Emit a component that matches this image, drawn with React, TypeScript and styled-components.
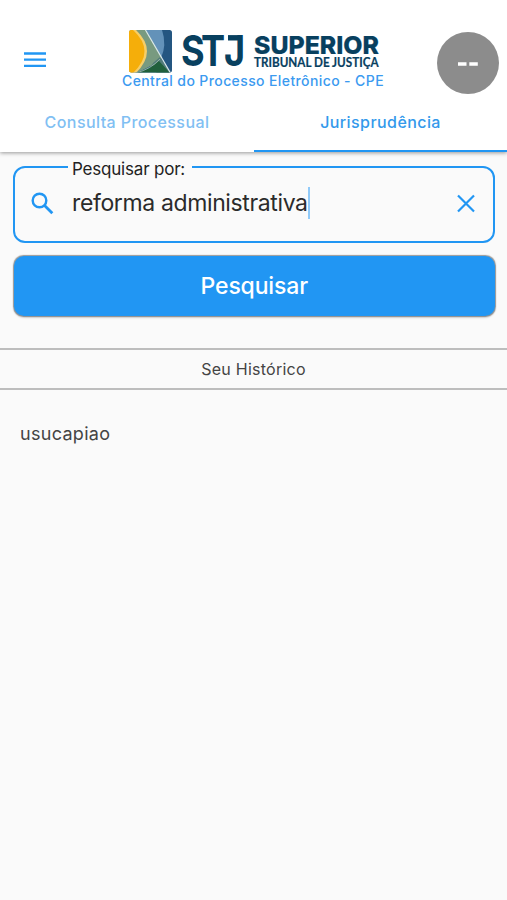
import React from "react";
import styled, { createGlobalStyle } from "styled-components";

const BLUE = "#2196f3";
const NAVY = "#08405f";

const GlobalStyle = createGlobalStyle`
  * { box-sizing: border-box; }
  body {
    margin: 0;
    background: #fafafa;
    font-family: Inter, "Liberation Sans", sans-serif;
    color: #333;
  }
  button { font-family: inherit; border: 0; padding: 0; background: none; cursor: pointer; }
`;

const Screen = styled.div`
  width: 100%;
  min-height: 900px;
  background: #fafafa;
  overflow: hidden;
`;

const Header = styled.header`
  height: 152px;
  padding-top: 27px;
  display: flex;
  flex-direction: column;
  background: #fff;
  box-shadow: 0 1px 4px rgba(0, 0, 0, 0.4);
`;

const TopBar = styled.div`
  height: 66px;
  flex: none;
  display: grid;
  grid-template-columns: 122px 262px 1fr;
`;

const MenuButton = styled.button`
  justify-self: start;
  align-self: start;
  width: 24px;
  height: 18px;
  margin: 24px 0 0 23px;
  color: ${BLUE};
  display: flex;
`;

const Brand = styled.div`
  display: flex;
  flex-direction: column;
`;

const LogoSvg = styled.svg`
  display: block;
  flex: none;
  overflow: visible;
`;

const Subtitle = styled.div`
  font-size: 14px;
  line-height: 18px;
  margin-top: -3px;
  font-weight: 500;
  letter-spacing: 0.39px;
  color: #3b9af0;
  white-space: nowrap;
`;

const Avatar = styled.div`
  justify-self: end;
  width: 62px;
  height: 62px;
  margin: 5px 8px 0 0;
  padding-top: 2px;
  border-radius: 50%;
  background: #8c8c8c;
  display: flex;
  align-items: center;
  justify-content: center;
`;

const Tabs = styled.nav`
  flex: 1;
  display: grid;
  grid-template-columns: 254px 1fr;
`;

const Tab = styled.button<{ $active?: boolean }>`
  padding-bottom: ${(p) => (p.$active ? 0 : 2)}px;
  border-bottom: ${(p) => (p.$active ? `2px solid ${BLUE}` : "0")};
  color: ${(p) => (p.$active ? "#3399eb" : "#81bff3")};
  font-size: 16px;
  font-weight: 500;
  letter-spacing: 0.42px;
`;

const Content = styled.main`
  padding: 7px 12.5px 0 13px;
  display: flex;
  flex-direction: column;
`;

const SearchField = styled.fieldset`
  margin: 0;
  min-width: 0;
  height: 84px;
  padding: 0 16px 0 15px;
  border: 2px solid ${BLUE};
  border-radius: 12px;
  color: ${BLUE};
`;

const Legend = styled.legend`
  margin-left: 38px;
  padding: 0 6px 0 4px;
  height: 16px;
  width: 124px;
  font-size: 17px;
  line-height: 20px;
  letter-spacing: -0.2px;
  color: #222;
  white-space: nowrap;
`;

const FieldRow = styled.div`
  height: 40px;
  margin-top: 8px;
  display: flex;
  align-items: center;
`;

const Query = styled.div`
  flex: 1;
  margin-left: 16px;
  display: flex;
  align-items: center;
  font-size: 23px;
  letter-spacing: -0.37px;
  color: #2b2b2b;
  white-space: nowrap;
`;

const Caret = styled.span`
  width: 2px;
  height: 32px;
  background: #90caf9;
`;

const ClearButton = styled.button`
  display: flex;
  color: ${BLUE};
`;

const SearchButton = styled.button`
  height: 60px;
  margin: 13px 0 0 1px;
  border-radius: 10px;
  background: ${BLUE};
  color: #fff;
  font-size: 23px;
  font-weight: 500;
  letter-spacing: -0.15px;
  box-shadow: 0 0 1px 0.5px rgba(110, 110, 110, 0.7), 0 2px 2px rgba(0, 0, 0, 0.15);
`;

const HistoryTitle = styled.h2`
  margin: 32px 0 0;
  height: 42px;
  border: solid #bdbdbd;
  border-width: 2px 0;
  font-size: 16px;
  font-weight: 400;
  letter-spacing: 0.25px;
  color: #444;
  display: flex;
  align-items: center;
  justify-content: center;
`;

const HistoryList = styled.ul`
  margin: 0;
  padding: 32px 20px;
  list-style: none;
`;

const HistoryItem = styled.li`
  font-size: 18px;
  line-height: 24px;
  letter-spacing: 0.3px;
  color: #444;
`;

function Logo() {
  return (
    <LogoSvg width="262" height="48" viewBox="122 27 262 48" role="img" aria-label="STJ">
      <defs>
        <clipPath id="mark"><rect x="129" y="30" width="43" height="42.5" rx="2.5" /></clipPath>
      </defs>
      <g clipPath="url(#mark)">
        <rect x="129" y="30" width="43" height="43" fill="#245681" />
        <path d="M146 30h16q5 15-1 28z" fill="#6392b9" />
        <path d="M136 30h10l16 28q-10 9-27 15z" fill="#789a80" />
        <path d="M160 57l11 16h-14q-8-5-4-10z" fill="#527b79" />
        <path d="M135 73q14-3 24-12l11 12z" fill="#21603c" />
        <path d="M136 30q22 21 0 43h-7v-43z" fill="#f7ce68" />
        <path d="M133 30q23 21 0 43h-4v-43z" fill="#f5ae0a" />
        <path d="M145.5 30l25 43" fill="none" stroke="#dce9ea" strokeWidth="1.2" />
        <path d="M136 73q15-4 24-14" fill="none" stroke="#a9c3ae" strokeWidth="0.8" />
      </g>
      <g fill={NAVY}>
        <text transform="scale(0.84 1)" x="215.5 239.3 266.6" y="66.4" fontFamily="Inter" fontSize="43" fontWeight="700">STJ</text>
        <rect x="228" y="35.1" width="10" height="5.4" />
        <text x="254" y="53.6" fontFamily="Inter" fontSize="25" fontWeight="800" stroke={NAVY} strokeWidth="0.2" textLength="125" lengthAdjust="spacingAndGlyphs">SUPERIOR</text>
        <text x="254" y="66.7" fontFamily="Lato" fontSize="12.5" fontWeight="700" stroke={NAVY} strokeWidth="0.2" textLength="124.5" lengthAdjust="spacingAndGlyphs">TRIBUNAL DE JUSTIÇA</text>
      </g>
    </LogoSvg>
  );
}

export default function App() {
  return (
    <>
      <GlobalStyle />
      <Screen>
        <Header>
          <TopBar>
            <MenuButton aria-label="Menu">
              <svg width="24" height="18" viewBox="0 0 24 18">
                <path d="M1 2.5h22M1 8.7h22M1 14.8h22" stroke="currentColor" strokeWidth="2.3" />
              </svg>
            </MenuButton>
            <Brand>
              <Logo />
              <Subtitle>Central do Processo Eletrônico - CPE</Subtitle>
            </Brand>
            <Avatar aria-label="Perfil">
              <svg width="22" height="4" viewBox="0 0 22 4">
                <path d="M1 2h8.5M12.3 2h8.5" stroke="#fff" strokeWidth="3.4" />
              </svg>
            </Avatar>
          </TopBar>
          <Tabs>
            <Tab>Consulta Processual</Tab>
            <Tab $active>Jurisprudência</Tab>
          </Tabs>
        </Header>
        <Content>
          <SearchField>
            <Legend>Pesquisar por:</Legend>
            <FieldRow>
              <svg width="26" height="24" viewBox="0 0 26 24" fill="none" stroke="currentColor">
                <circle cx="9.5" cy="9.5" r="6.8" strokeWidth="2.4" />
                <path d="M14.3 14.3l8 8" strokeWidth="2.8" />
              </svg>
              <Query>
                <span>reforma administrativa</span>
                <Caret />
              </Query>
              <ClearButton aria-label="Limpar">
                <svg width="22" height="22" viewBox="0 0 22 22">
                  <path d="M3 3.5l16 16M19 3.5L3 19.5" stroke="currentColor" strokeWidth="2.2" />
                </svg>
              </ClearButton>
            </FieldRow>
          </SearchField>
          <SearchButton>Pesquisar</SearchButton>
        </Content>
        <HistoryTitle>Seu Histórico</HistoryTitle>
        <HistoryList>
          <HistoryItem>usucapiao</HistoryItem>
        </HistoryList>
      </Screen>
    </>
  );
}
